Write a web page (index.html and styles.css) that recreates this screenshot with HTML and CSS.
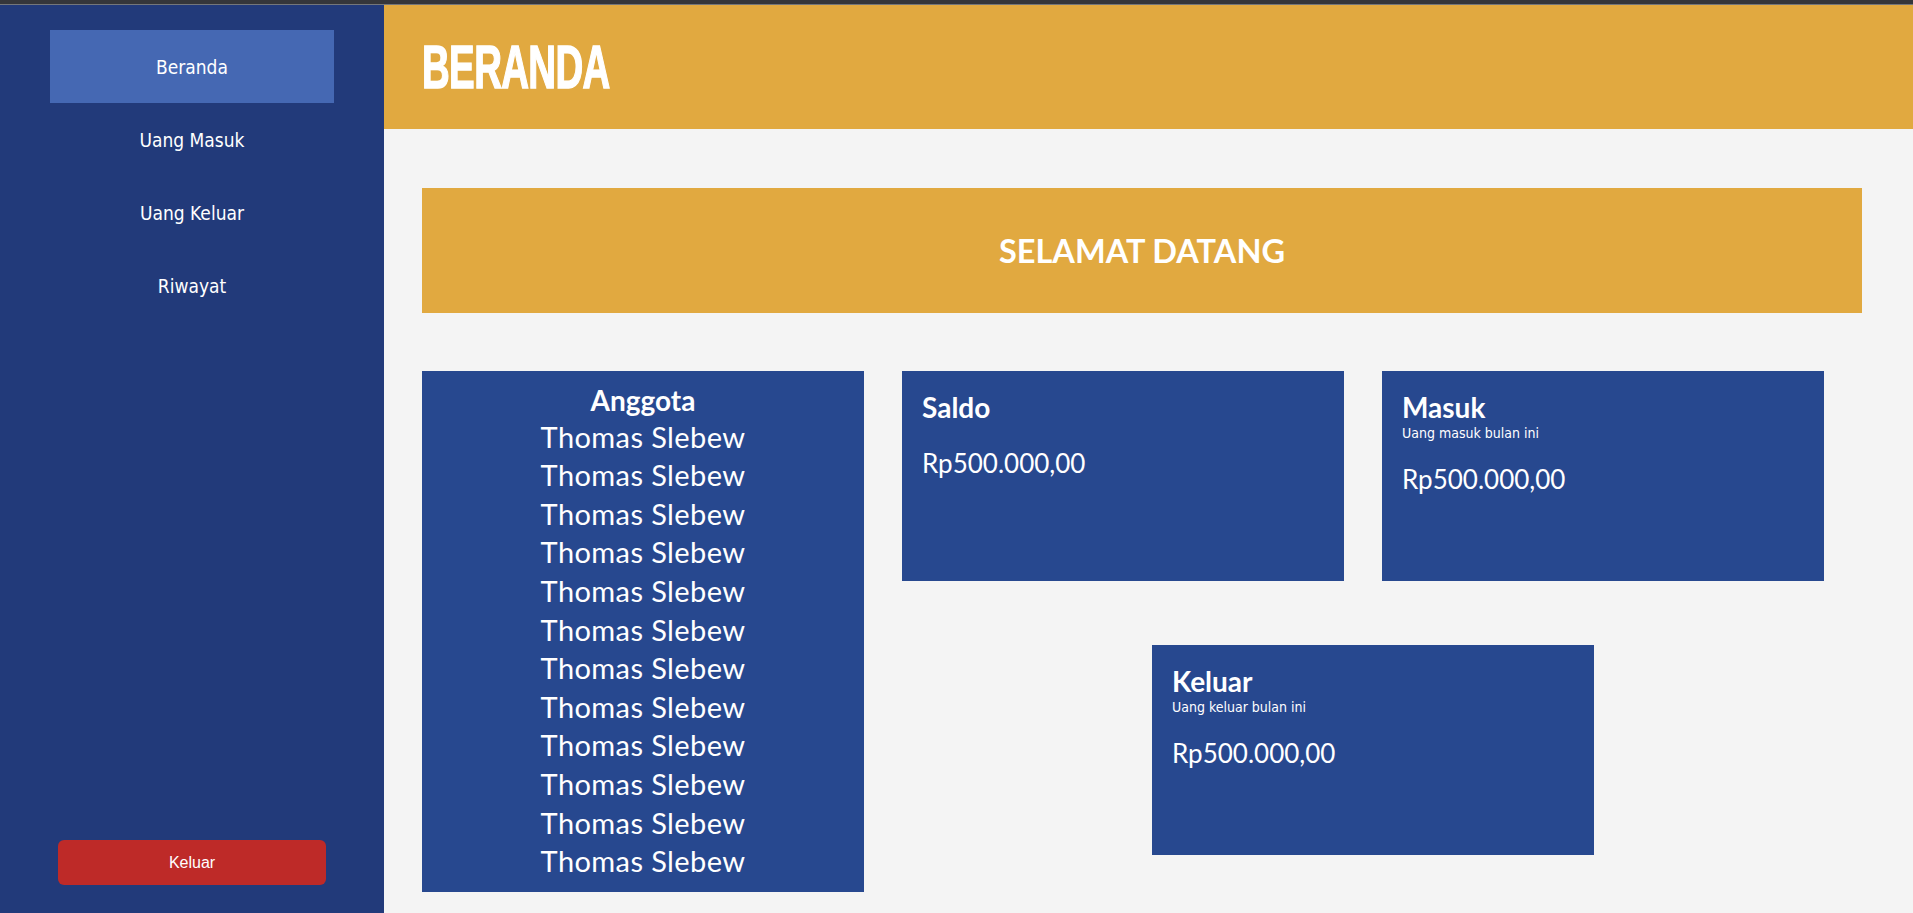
FILE: index.html
```html
<!DOCTYPE html>
<html lang="id">
<head>
<meta charset="utf-8">
<title>Beranda</title>
<link rel="stylesheet" href="styles.css">
</head>
<body>
<div class="topbar"></div>
<div class="layout">
  <aside class="sidebar">
    <nav class="nav">
      <a class="nav-item active" href="#">Beranda</a>
      <a class="nav-item" href="#">Uang Masuk</a>
      <a class="nav-item" href="#">Uang Keluar</a>
      <a class="nav-item" href="#">Riwayat</a>
    </nav>
    <button class="logout">Keluar</button>
  </aside>
  <main class="main">
    <header class="header">
      <h1 class="page-title">BERANDA</h1>
    </header>
    <section class="content">
      <div class="welcome">SELAMAT DATANG</div>
      <div class="cards">
        <div class="card members">
          <h3 class="members-title">Anggota</h3>
          <ul class="member-list">
            <li>Thomas Slebew</li>
            <li>Thomas Slebew</li>
            <li>Thomas Slebew</li>
            <li>Thomas Slebew</li>
            <li>Thomas Slebew</li>
            <li>Thomas Slebew</li>
            <li>Thomas Slebew</li>
            <li>Thomas Slebew</li>
            <li>Thomas Slebew</li>
            <li>Thomas Slebew</li>
            <li>Thomas Slebew</li>
            <li>Thomas Slebew</li>
          </ul>
        </div>
        <div class="right-cards">
          <div class="card-row">
            <div class="card stat">
              <h3 class="stat-title">Saldo</h3>
              <p class="stat-value">Rp500.000,00</p>
            </div>
            <div class="card stat">
              <h3 class="stat-title">Masuk</h3>
              <p class="stat-sub">Uang masuk bulan ini</p>
              <p class="stat-value">Rp500.000,00</p>
            </div>
          </div>
          <div class="card-row center">
            <div class="card stat">
              <h3 class="stat-title">Keluar</h3>
              <p class="stat-sub">Uang keluar bulan ini</p>
              <p class="stat-value">Rp500.000,00</p>
            </div>
          </div>
        </div>
      </div>
    </section>
  </main>
</div>
</body>
</html>
```
FILE: styles.css
```css
* { box-sizing: border-box; }

html, body {
  margin: 0;
  padding: 0;
  height: 100%;
}

body {
  background: #f4f4f4;
  font-family: Lato, "Noto Sans", sans-serif;
  color: #ffffff;
  overflow: hidden;
}

.topbar {
  height: 5px;
  background: #35363a;
  border-bottom: 1px solid #74767a;
}

.layout {
  display: flex;
  height: calc(100vh - 5px);
}

.sidebar {
  width: 384px;
  flex: none;
  background: #223a7a;
  display: flex;
  flex-direction: column;
  justify-content: space-between;
  padding: 25px 0 28px;
}

.nav {
  display: flex;
  flex-direction: column;
}

.nav-item {
  height: 73px;
  margin: 0 50px;
  display: flex;
  align-items: center;
  justify-content: center;
  color: #ffffff;
  text-decoration: none;
  font-family: "DejaVu Sans Condensed", "DejaVu Sans", sans-serif;
  font-stretch: semi-condensed;
  font-size: 19px;
}

.nav-item.active {
  background: #4568b3;
}

.logout {
  margin: 0 58px;
  height: 45px;
  border: none;
  border-radius: 6px;
  background: #be2a28;
  color: #ffffff;
  font-family: "Liberation Sans", Arial, sans-serif;
  font-size: 16px;
}

.main {
  flex: 1;
  display: flex;
  flex-direction: column;
}

.header {
  height: 124px;
  background: #e1a940;
  display: flex;
  align-items: center;
  padding-left: 38px;
}

.page-title {
  margin: 0;
  font-family: "Liberation Sans", Arial, sans-serif;
  font-weight: 700;
  font-size: 61px;
  line-height: 1;
  letter-spacing: -1px;
  transform: scaleX(0.63);
  transform-origin: left center;
  -webkit-text-stroke: 1.5px #ffffff;
}

.content {
  padding: 59px 51px 20px 38px;
}

.welcome {
  height: 125px;
  background: #e1a940;
  display: flex;
  align-items: center;
  justify-content: center;
  font-weight: 700;
  font-size: 32.5px;
}

.cards {
  display: flex;
  gap: 38px;
  margin-top: 58px;
  align-items: flex-start;
}

.card {
  background: #27488f;
  width: 442px;
  flex: none;
}

.members {
  padding: 13px 0 11px;
  text-align: center;
}

.members-title {
  margin: 0;
  font-size: 28px;
  font-weight: 700;
  line-height: 1.2;
}

.member-list {
  list-style: none;
  margin: 0;
  padding: 0;
  font-size: 29px;
  line-height: 38.6px;
  letter-spacing: 0.4px;
}

.right-cards {
  width: 942px;
  display: flex;
  flex-direction: column;
  gap: 64px;
}

.card-row {
  display: flex;
  gap: 38px;
}

.card-row.center {
  justify-content: center;
}

.stat {
  height: 210px;
  padding: 20px 20px;
}

.stat-title {
  margin: 0;
  font-size: 28px;
  font-weight: 700;
  line-height: 1.2;
}

.stat-sub {
  margin: 0;
  font-family: "DejaVu Sans Condensed", "DejaVu Sans", sans-serif;
  font-stretch: semi-condensed;
  font-size: 14px;
}

.stat-value {
  margin: 23px 0 0;
  font-size: 26px;
  line-height: 1.2;
}
```
